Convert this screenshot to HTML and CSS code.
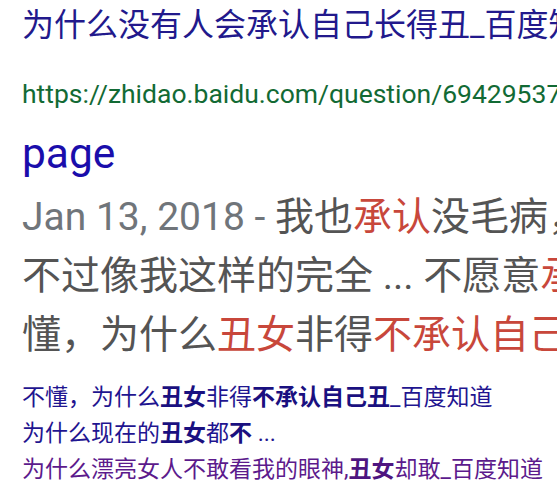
FILE: index.html
```html
<!DOCTYPE html>
<html lang="zh">
<head>
<meta charset="utf-8">
<link rel="stylesheet" href="styles.css">
</head>
<body>
<div class="result">
  <div class="title">为什么没有人会承认自己长得丑_百度知道 - Baidu Zhidao</div>
  <div class="url">https://zhidao.baidu.com/question/694295374.html</div>
  <div class="title2">page</div>
  <div class="snippet">
    <div class="line"><span class="date">Jan 13, 2018 - </span>我也<em>承认</em>没毛病，不过</div>
    <div class="line">不过像我这样的完全 ... 不愿意<em>承认</em>的</div>
    <div class="line">懂，为什么<em>丑女</em>非得<em>不承认自己丑</em></div>
  </div>
  <div class="related">
    <div class="rline">不懂，为什么<b>丑女</b>非得<b>不承认自己丑</b>_百度知道</div>
    <div class="rline">为什么现在的<b>丑女</b>都<b>不</b> ...</div>
    <div class="rline visited">为什么漂亮女人不敢看我的眼神,<b>丑女</b>却敢_百度知道</div>
  </div>
</div>
</body>
</html>
```

FILE: styles.css
```css
html, body {
  margin: 0;
  padding: 0;
  background: #ffffff;
}
body {
  font-family: Roboto, "Noto Sans CJK SC", sans-serif;
  width: 557px;
  height: 492px;
  overflow: hidden;
}
.result {
  padding-left: 22px;
  display: flex;
  flex-direction: column;
}
.title, .url, .title2, .line, .rline {
  white-space: nowrap;
  overflow: hidden;
}
.title {
  margin-top: 5px;
  font-size: 32px;
  line-height: 40px;
  color: #22198c;
}
.url {
  margin-top: 33px;
  font-size: 26.5px;
  line-height: 32px;
  color: #126a34;
}
.title2 {
  margin-top: 20px;
  font-size: 42.5px;
  line-height: 48px;
  color: #1a0dab;
}
.snippet {
  margin-top: 10px;
  font-size: 39px;
  line-height: 59px;
  color: #545454;
}
.date {
  color: #70757a;
}
.snippet em {
  font-style: normal;
  color: #c8473b;
}
.related {
  margin-top: 15px;
  font-size: 23px;
  line-height: 36px;
  color: #1f1590;
}
.related b {
  font-weight: bold;
  color: #1a1080;
}
.rline.visited {
  color: #5c1a8c;
}
.rline.visited b {
  color: #4e1580;
}
```
